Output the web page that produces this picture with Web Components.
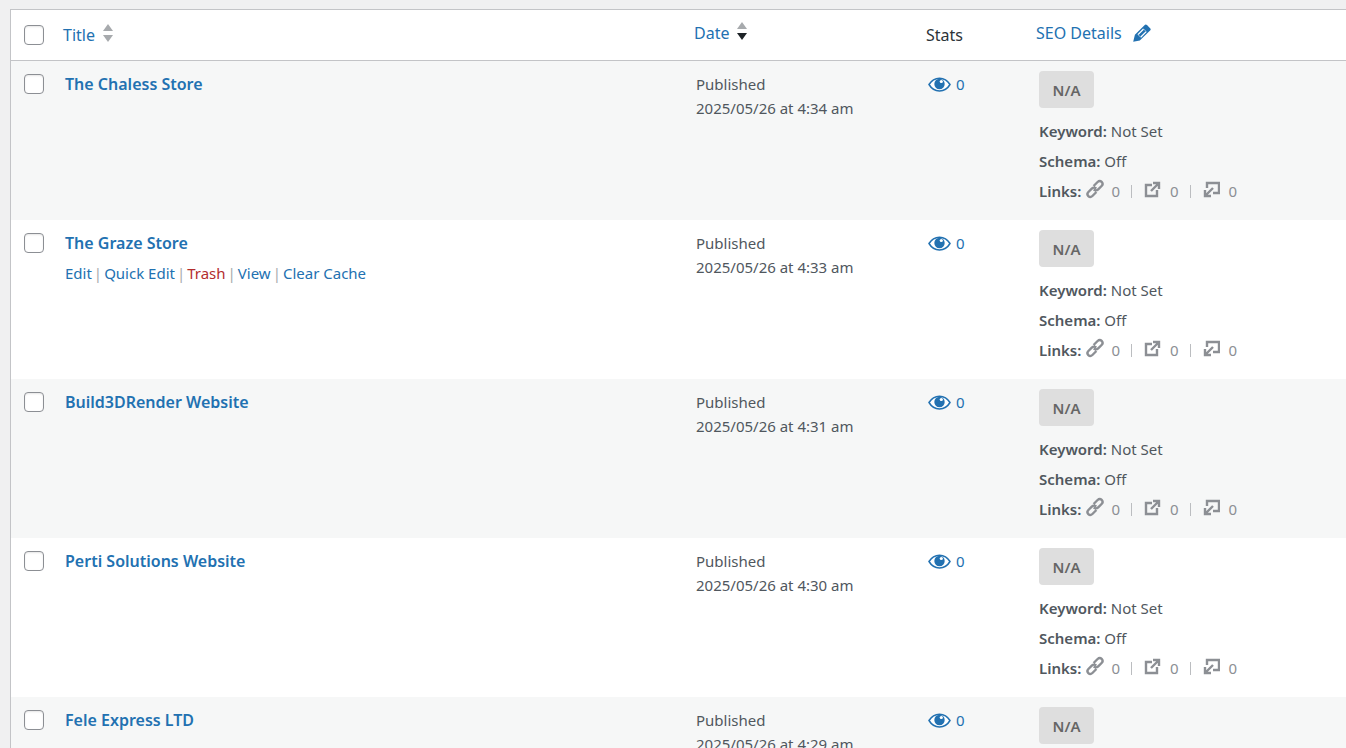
<!DOCTYPE html>
<html lang="en">
<head>
<meta charset="utf-8">
<title>Posts</title>
<style>
  body {
    margin: 0;
    background: #f0f0f1;
    color: #50575e;
    font-family: "Segoe UI", "Noto Sans", "Open Sans", sans-serif;
    font-size: 15px;
    line-height: 24px;
    overflow: hidden;
    height: 100vh;
  }
</style>
</head>
<body>
<posts-table></posts-table>

<template id="postsTable">
  <style>
    :host {
      display: block;
      padding: 9px 0 0 10px;
      --link: #2271b1;
    }
    table {
      width: 100%;
      table-layout: fixed;
      border-collapse: separate;
      border-spacing: 0;
      background: #fff;
      border: 1px solid #c3c4c7;
      border-right: 0;
    }
    th, td { box-sizing: border-box; text-align: left; vertical-align: top; }
    thead th {
      height: 51px;
      padding: 11px 0 0 10px;
      border-bottom: 1px solid #c3c4c7;
      color: #2c3338;
      font-size: 16px;
      font-weight: 400;
    }
    thead .check { width: 42px; padding: 15px 0 0 13px; }
    thead .title { padding-top: 13px; }
    thead .date { width: 232px; }
    thead .stats { width: 110px; padding-top: 13px; }
    thead .seo { width: 320px; }
    tbody tr { height: 159px; }
    tbody tr:nth-child(odd) { background: #f6f7f7; }
    tbody th, tbody td { padding: 11px 0 0 12px; font-weight: 400; }
    tbody td.check { padding: 13px 0 0 13px; }
    tbody td.seo { padding: 10px 0 0 13px; }
    input {
      appearance: none;
      display: block;
      box-sizing: border-box;
      width: 20px;
      height: 20px;
      margin: 0;
      border: 1px solid #8c8f94;
      border-radius: 4px;
      background: #fff;
      box-shadow: inset 0 1px 2px rgba(0, 0, 0, .1);
    }
    a { color: var(--link); text-decoration: none; }
    .row-title { font-size: 16px; font-weight: 600; }
  </style>
  <table>
    <thead>
      <tr>
        <th class="check"><input type="checkbox" aria-label="Select all"></th>
        <th class="title"><sort-link>Title</sort-link></th>
        <th class="date"><sort-link order="desc">Date</sort-link></th>
        <th class="stats">Stats</th>
        <th class="seo"><edit-heading>SEO Details</edit-heading></th>
      </tr>
    </thead>
    <tbody></tbody>
  </table>
</template>

<template id="sortLink">
  <style>
    :host { display: block; }
    a { display: flex; align-items: center; gap: 8px; color: #2271b1; text-decoration: none; }
    svg { width: 10px; height: 20px; margin-bottom: 4px; fill: #a7aaad; }
    :host([order="desc"]) .down { fill: #1d2327; }
  </style>
  <a href="#"><slot></slot>
    <svg viewBox="0 0 10 20" aria-hidden="true">
      <path d="M5 1 10 8H0z"/>
      <path class="down" d="M0 12h10l-5 7z"/>
    </svg>
  </a>
</template>

<template id="editHeading">
  <style>
    :host { display: block; }
    a { display: flex; align-items: center; gap: 11px; color: #2271b1; text-decoration: none; }
    svg { width: 18px; height: 18px; }
  </style>
  <a href="#"><slot></slot>
    <svg viewBox="0 0 18 18" aria-hidden="true">
      <path fill="#2271b1" d="M11.5 1.2q1.2-1.2 2.5-.1l3.1 3.1q1.2 1.2 0 2.4L6.8 16.4.2 17.8l1.7-7z"/>
      <path fill="none" stroke="#fff" stroke-width="1.3" d="M5 10.6 10.6 5M7.6 13.2l5.6-5.6"/>
      <path fill="none" stroke="#9cc0dc" stroke-width="1" d="m10.6 5 2.6 2.6M5 10.6l2.6 2.6"/>
    </svg>
  </a>
</template>

<template id="viewCount">
  <style>
    :host { display: block; }
    a { display: flex; align-items: center; gap: 5px; color: #2271b1; text-decoration: none; }
    svg { width: 23px; height: 15px; }
  </style>
  <a href="#" aria-label="Views">
    <svg viewBox="0 0 23 15" aria-hidden="true">
      <path fill="#fff" stroke="#2271b1" stroke-width="1.5" d="M1 7.5C6-1 17-1 22 7.5 17 16 6 16 1 7.5z"/>
      <circle cx="11.5" cy="7" r="5.2" fill="#2271b1"/>
      <circle cx="13.3" cy="4.5" r="1.6" fill="#fff"/>
    </svg>
    <slot></slot>
  </a>
</template>

<template id="rowActions">
  <style>
    :host { display: flex; gap: 2px; margin-top: 6px; color: #a7aaad; }
    a { color: #2271b1; text-decoration: none; }
    .trash { color: #b32d2e; }
  </style>
  <a href="#">Edit</a>|<a href="#">Quick Edit</a>|<a class="trash" href="#">Trash</a>|<a href="#">View</a>|<a href="#">Clear Cache</a>
</template>

<template id="seoDetails">
  <style>
    :host { display: block; }
    .score {
      display: block;
      width: 55px;
      box-sizing: border-box;
      margin-bottom: 11px;
      padding: 7px 0 6px;
      border-radius: 4px;
      background: #dedede;
      color: #666;
      font-weight: 600;
      text-align: center;
    }
    p { margin: 0 0 6px; }
    b { font-weight: 600; }
    .links { display: flex; align-items: center; }
    .links span { color: #8c8f94; }
    .links i { width: 1px; height: 13px; margin: 0 12px 0 11px; background: #bbbdc0; }
    svg {
      width: 20px;
      height: 20px;
      margin: 0 6px 4px 4px;
      fill: none;
      stroke: #8c8f94;
      stroke-width: 2.4;
    }
    .box { width: 17px; height: 17px; margin-left: 0; margin-right: 9px; }
  </style>
  <span class="score"><slot name="score"></slot></span>
  <p><b>Keyword:</b> <slot name="keyword"></slot></p>
  <p><b>Schema:</b> <slot name="schema"></slot></p>
  <p class="links"><b>Links:</b>
    <svg viewBox="0 0 20 20" aria-hidden="true">
      <path d="m8.6 7 4-4c2.8-2.7 6.7 1.2 4 4l-3.4 3.4c-1.3 1.3-3.2 1.3-4.4 0M11.4 13l-4 4c-2.8 2.7-6.7-1.2-4-4l3.4-3.4c1.3-1.3 3.2-1.3 4.4 0"/>
    </svg>
    <span>0</span><i></i>
    <svg class="box" viewBox="0 0 17 17" aria-hidden="true">
      <path d="M8 4H2v11h11V9M9 2h6v6M15 2 7 10"/>
    </svg>
    <span>0</span><i></i>
    <svg class="box" viewBox="0 0 17 17" aria-hidden="true">
      <path d="M4 7V2h12v10h-6M2 9v6h6M2 15l8-8"/>
    </svg>
    <span>0</span>
  </p>
</template>

<script>
  (function postsTable(customElements, document) {
    'use strict';

    const posts = [
      { title: 'The Chaless Store', time: '4:34 am' },
      { title: 'The Graze Store', time: '4:33 am', actions: true },
      { title: 'Build3DRender Website', time: '4:31 am' },
      { title: 'Perti Solutions Website', time: '4:30 am' },
      { title: 'Fele Express LTD', time: '4:29 am' }
    ];

    class TemplateElement extends HTMLElement {
      constructor() {
        super();
        const temp = document.getElementById(this.constructor.template);
        this.attachShadow({ mode: 'open' }).appendChild(document.importNode(temp.content, true));
      }
    }

    class SortLink extends TemplateElement {
      static get template() { return 'sortLink'; }
    }

    class EditHeading extends TemplateElement {
      static get template() { return 'editHeading'; }
    }

    class ViewCount extends TemplateElement {
      static get template() { return 'viewCount'; }
    }

    class RowActions extends TemplateElement {
      static get template() { return 'rowActions'; }
    }

    class SeoDetails extends TemplateElement {
      static get template() { return 'seoDetails'; }
    }

    class PostsTable extends TemplateElement {
      static get template() { return 'postsTable'; }

      connectedCallback() {
        this.shadowRoot.querySelector('tbody').innerHTML = posts.map(this.renderRow).join('');
      }

      renderRow(post) {
        return `
          <tr>
            <td class="check"><input type="checkbox" aria-label="Select ${post.title}"></td>
            <th class="title" scope="row">
              <a class="row-title" href="#">${post.title}</a>
              ${post.actions ? '<row-actions></row-actions>' : ''}
            </th>
            <td>Published<br>2025/05/26 at ${post.time}</td>
            <td><view-count>0</view-count></td>
            <td class="seo">
              <seo-details>
                <span slot="score">N/A</span>
                <span slot="keyword">Not Set</span>
                <span slot="schema">Off</span>
              </seo-details>
            </td>
          </tr>`;
      }
    }

    customElements.define('sort-link', SortLink);
    customElements.define('edit-heading', EditHeading);
    customElements.define('view-count', ViewCount);
    customElements.define('row-actions', RowActions);
    customElements.define('seo-details', SeoDetails);
    customElements.define('posts-table', PostsTable);
  })(window.customElements, document)
</script>
</body>
</html>
